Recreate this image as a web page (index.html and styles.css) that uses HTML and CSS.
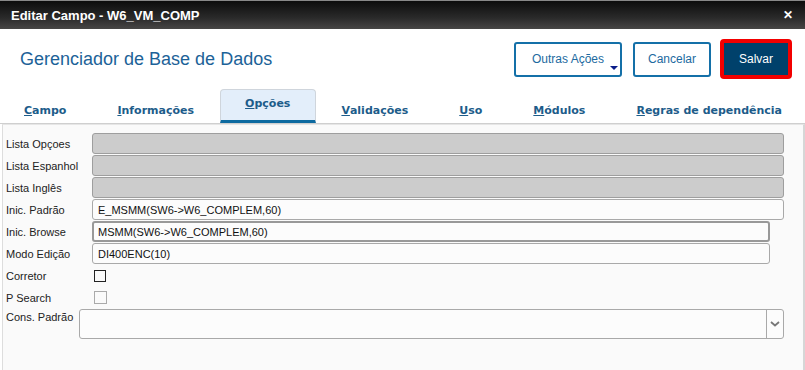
FILE: index.html
```html
<!DOCTYPE html>
<html lang="pt-BR">

<head>
    <meta charset="UTF-8">
    <title>Editar Campo</title>
    <link rel="stylesheet" href="styles.css">
</head>

<body>
    <div class="titlebar">
        <span class="titleText">Editar Campo - W6_VM_COMP</span>
        <span class="closeBtn">&#x2715;</span>
    </div>

    <div class="header">
        <h1>Gerenciador de Base de Dados</h1>
        <div class="actions">
            <button class="btn btnMenu">Outras Ações<span class="caret"></span></button>
            <button class="btn btnCancel">Cancelar</button>
            <div class="saveOutline"><button class="btn btnPrimary">Salvar</button></div>
        </div>
    </div>

    <div class="tabs">
        <div class="tab"><u>C</u>ampo</div>
        <div class="tab"><u>I</u>nformações</div>
        <div class="tab active"><u>O</u>pções</div>
        <div class="tab"><u>V</u>alidações</div>
        <div class="tab"><u>U</u>so</div>
        <div class="tab"><u>M</u>ódulos</div>
        <div class="tab"><u>R</u>egras de dependência</div>
    </div>

    <div class="panel">
        <div class="row">
            <label>Lista Opçoes</label>
            <div class="field disabled"></div>
        </div>
        <div class="row">
            <label>Lista Espanhol</label>
            <div class="field disabled"></div>
        </div>
        <div class="row">
            <label>Lista Inglês</label>
            <div class="field disabled"></div>
        </div>
        <div class="row">
            <label>Inic. Padrão</label>
            <div class="field">E_MSMM(SW6-&gt;W6_COMPLEM,60)</div>
        </div>
        <div class="row">
            <label>Inic. Browse</label>
            <div class="field short focus">MSMM(SW6-&gt;W6_COMPLEM,60)</div>
        </div>
        <div class="row">
            <label>Modo Edição</label>
            <div class="field short">DI400ENC(10)</div>
        </div>
        <div class="row">
            <label>Corretor</label>
            <span class="check"></span>
        </div>
        <div class="row">
            <label>P Search</label>
            <span class="check off"></span>
        </div>
        <div class="row comboRow">
            <label>Cons. Padrão</label>
            <div class="combo">
                <div class="comboValue"></div>
                <div class="comboArrow">
                    <svg width="10" height="6" viewBox="0 0 10 6"><path d="M1 1 L5 4.5 L9 1" fill="none" stroke="#777" stroke-width="1.8"/></svg>
                </div>
            </div>
        </div>
    </div>
</body>

</html>
```

FILE: styles.css
```css
body {
    margin: 0;
    width: 805px;
    height: 370px;
    overflow: hidden;
    background: #fff;
    font-family: "Liberation Sans", Arial, sans-serif;
}

.titlebar {
    height: 29px;
    background: linear-gradient(#0c0c0c, #2a2a2a 60%, #474645);
    border-top: 1px solid #888;
    box-sizing: border-box;
    display: flex;
    align-items: center;
    justify-content: space-between;
    padding: 0 12px 0 11px;
    color: #fff;
}

.titleText {
    font-size: 13px;
    font-weight: bold;
}

.closeBtn {
    font-size: 12px;
    font-weight: bold;
}

.header {
    height: 60px;
    display: flex;
    align-items: center;
    justify-content: space-between;
    padding: 0 13px 0 20px;
}

h1 {
    margin: 0;
    font-size: 18px;
    font-weight: normal;
    color: #1c6298;
}

.actions {
    display: flex;
    align-items: center;
    gap: 11px;
}

.btn {
    height: 35px;
    border: 2px solid #1470a8;
    border-radius: 3px;
    background: #fff;
    color: #1c6aa0;
    font-family: "Liberation Sans", Arial, sans-serif;
    font-size: 12px;
    padding: 0;
    white-space: nowrap;
}

.btnMenu {
    width: 108px;
    position: relative;
}

.caret {
    position: absolute;
    right: 2px;
    bottom: 5px;
    border-left: 4px solid transparent;
    border-right: 4px solid transparent;
    border-top: 4px solid #0a1d8a;
}

.btnCancel {
    width: 78px;
}

.saveOutline {
    margin-left: -2px;
    border: 4px solid #f20000;
    border-radius: 4px;
}

.btnPrimary {
    display: block;
    width: 64px;
    height: 32px;
    border: none;
    border-radius: 0;
    background: #00416b;
    color: #fff;
}

.tabs {
    height: 34px;
    display: flex;
    align-items: stretch;
    border-bottom: 1px solid #cfcfcf;
    margin-left: -1.5px;
}

.tab {
    flex-shrink: 0;
    white-space: nowrap;
    padding: 9px 25.5px 0;
    display: flex;
    align-items: center;
    font-family: "DejaVu Sans", Verdana, sans-serif;
    font-size: 11px;
    font-weight: bold;
    color: #1d5c8a;
    box-sizing: border-box;
}

.tab.active {
    background: #e3eefa;
    border: 1px solid #cfd5dc;
    border-bottom: 3px solid #0d6aa0;
    border-radius: 4px 4px 0 0;
    padding: 0 24.5px 4px;
}

.panel {
    margin-left: 2px;
    height: 246px;
    background: #fafafa;
    border-left: 1px solid #ddd;
    border-right: 2px solid #d6d6d6;
    border-top: 1px solid #e6e6e6;
    padding: 8px 19px 0 3px;
    box-sizing: border-box;
}

.row {
    display: flex;
    align-items: center;
    height: 21px;
    margin-bottom: 1px;
}

.row label {
    width: 86px;
    flex-shrink: 0;
    font-size: 11px;
    color: #222;
}

.field {
    flex: 1;
    height: 21px;
    box-sizing: border-box;
    border: 1px solid #a9a9a9;
    border-radius: 3px;
    background: #fcfcfc;
    font-size: 11px;
    color: #111;
    padding: 4px 5px 0;
}

.field.disabled {
    background: #cccccc;
    border-color: #9e9e9e;
}

.field.short {
    margin-right: 14px;
}

.field.focus {
    border: 2px solid #999;
    padding: 3px 4px 0;
}

.check {
    width: 10px;
    height: 10px;
    border: 1.5px solid #222;
    margin-left: 2px;
}

.check.off {
    border: 1px solid #aaa;
    width: 11px;
    height: 11px;
}

.comboRow {
    height: 30px;
    align-items: flex-start;
}

.comboRow label {
    width: 73px;
    padding-top: 2px;
}

.combo {
    flex: 1;
    height: 30px;
    box-sizing: border-box;
    border: 1px solid #a9a9a9;
    border-radius: 3px;
    display: flex;
    background: #fcfcfc;
}

.comboValue {
    flex: 1;
}

.comboArrow {
    width: 16px;
    border-left: 1px solid #a9a9a9;
    display: flex;
    align-items: center;
    justify-content: center;
}
```
